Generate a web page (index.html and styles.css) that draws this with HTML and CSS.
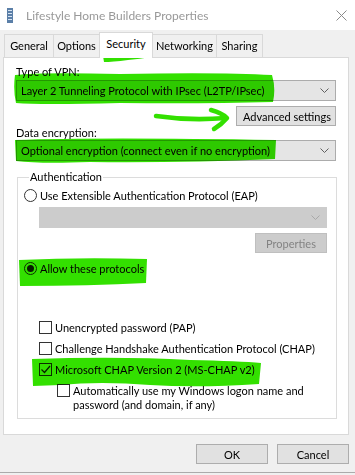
FILE: index.html
```html
<!DOCTYPE html>
<html lang="en">
<head>
    <meta charset="UTF-8">
    <meta name="viewport" content="width=device-width, initial-scale=1.0">
    <title>Lifestyle Home Builders Properties</title>
    <link rel="stylesheet" href="styles.css">
</head>
<body>
    <div class="window">
        <div class="titlebar">
            <svg class="app-icon" width="6" height="15" viewBox="0 0 6 15">
                <rect x="0" y="0" width="6" height="15" fill="#5b7fa8"/>
                <rect x="1" y="2" width="4" height="1" fill="#d6e3f2"/>
                <rect x="1" y="5" width="4" height="1" fill="#d6e3f2"/>
                <rect x="1" y="8" width="4" height="1" fill="#d6e3f2"/>
                <rect x="1" y="11" width="4" height="1" fill="#d6e3f2"/>
            </svg>
            <span class="title">Lifestyle Home Builders Properties</span>
            <svg class="close" width="11" height="11" viewBox="0 0 11 11">
                <path d="M0.5 0.5 L10.5 10.5 M10.5 0.5 L0.5 10.5" stroke="#8a8a8a" stroke-width="1"/>
            </svg>
        </div>

        <div class="tabs">
            <div class="tab tab-general">General</div>
            <div class="tab tab-options">Options</div>
            <div class="tab tab-security active">Security</div>
            <div class="tab tab-networking">Networking</div>
            <div class="tab tab-sharing">Sharing</div>
        </div>

        <div class="panel">
            <div class="label">Type of VPN:</div>
            <div class="combo">
                <span>Layer 2 Tunneling Protocol with IPsec (L2TP/IPsec)</span>
                <svg class="chevron" width="9" height="5" viewBox="0 0 9 5"><path d="M0.5 0.5 L4.5 4.5 L8.5 0.5" fill="none" stroke="#606060"/></svg>
            </div>
            <div class="button-row">
                <button class="btn btn-wide">Advanced settings</button>
            </div>
            <div class="label label-tight">Data encryption:</div>
            <div class="combo">
                <span>Optional encryption (connect even if no encryption)</span>
                <svg class="chevron" width="9" height="5" viewBox="0 0 9 5"><path d="M0.5 0.5 L4.5 4.5 L8.5 0.5" fill="none" stroke="#606060"/></svg>
            </div>

            <fieldset class="group">
                <legend>Authentication</legend>

                <div class="option">
                    <span class="radio"></span>
                    <span>Use Extensible Authentication Protocol (EAP)</span>
                </div>
                <div class="combo combo-disabled">
                    <span></span>
                    <svg class="chevron" width="9" height="5" viewBox="0 0 9 5"><path d="M0.5 0.5 L4.5 4.5 L8.5 0.5" fill="none" stroke="#a8a8a8"/></svg>
                </div>
                <div class="button-row">
                    <button class="btn btn-disabled">Properties</button>
                </div>

                <div class="option option-allow">
                    <span class="radio checked"></span>
                    <span>Allow these protocols</span>
                </div>

                <div class="option option-first">
                    <span class="check"></span>
                    <span>Unencrypted password (PAP)</span>
                </div>
                <div class="option">
                    <span class="check"></span>
                    <span>Challenge Handshake Authentication Protocol (CHAP)</span>
                </div>
                <div class="option">
                    <span class="check checked">
                        <svg width="11" height="11" viewBox="0 0 11 11"><path d="M1.5 5.5 L4.5 8.5 L10 2" fill="none" stroke="#222" stroke-width="1.2"/></svg>
                    </span>
                    <span>Microsoft CHAP Version 2 (MS-CHAP v2)</span>
                </div>
                <div class="option option-sub">
                    <span class="check"></span>
                    <span class="wrap">Automatically use my Windows logon name and password (and domain, if any)</span>
                </div>
            </fieldset>
        </div>

        <div class="footer">
            <button class="btn">OK</button>
            <button class="btn">Cancel</button>
        </div>

        <!-- marker scribbles drawn over the screenshot -->
        <svg class="marks" width="355" height="475" viewBox="0 0 355 475">
            <g fill="#33e000">
                <path d="M102 36 Q125 34 147 34 Q150 35 150 39 L151 57 Q140 59 128 60 Q112 62 104 62 L102 50 Z"/>
                <path d="M15 75 Q40 72 120 74 Q220 72 272 75 Q276 88 273 102 Q200 104 120 103 Q40 105 16 103 Q13 90 15 75 Z"/>
                <path d="M15 140 Q100 137 276 140 L275 159 Q180 163 90 162 Q40 164 16 161 Z"/>
                <path d="M19 260 Q80 257 147 259 L146 283 Q90 286 20 286 Z"/>
                <path d="M32 359 Q120 356 190 360 Q240 361 261 363 L259 384 Q200 388 150 385 Q100 381 60 385 L33 386 Z"/>
            </g>
            <g fill="none" stroke="#33e000" stroke-width="4.5" stroke-linecap="round" stroke-linejoin="round">
                <path d="M156 116 Q190 121 226 118"/>
                <path d="M211 110 Q222 113 227 118 Q222 124 214 129"/>
            </g>
        </svg>
    </div>
</body>
</html>
```

FILE: styles.css
```css
* {
    box-sizing: border-box;
}
body {
    margin: 0;
    font-family: Lato, "Liberation Sans", sans-serif;
    font-size: 11px;
    color: #000;
    background: #f0f0f0;
}
.window {
    position: relative;
    width: 355px;
    height: 473px;
    background: #f0f0f0;
    border-bottom: 1px solid #ababab;
    white-space: nowrap;
}
.titlebar {
    height: 30px;
    background: #fff;
    display: flex;
    align-items: center;
    padding-left: 7px;
}
.app-icon {
    margin-right: 13px;
}
.title {
    color: #999;
    font-size: 12px;
    flex: 1;
}
.close {
    margin-right: 8px;
}
.tabs {
    display: flex;
    align-items: flex-end;
    height: 27px;
    padding-left: 4px;
}
.tab {
    height: 23px;
    line-height: 21px;
    text-align: center;
    border: 1px solid #d9d9d9;
    border-bottom: none;
    border-right: none;
    background: #f0f0f0;
}
.tab-general { width: 49px; }
.tab-options { width: 46px; }
.tab-security { width: 54px; }
.tab-networking { width: 63px; }
.tab-sharing { width: 47px; }
.tab:last-child {
    border-right: 1px solid #d9d9d9;
}
.tab.active {
    height: 26px;
    background: #fff;
    border-right: 1px solid #d9d9d9;
    margin-bottom: -1px;
    position: relative;
    z-index: 1;
}
.tab.active + .tab {
    border-left: none;
}
.panel {
    margin-left: 3px;
    width: 346px;
    height: 378px;
    background: #fff;
    border: 1px solid #d9d9d9;
    padding: 6px 12px 0 12px;
}
.label {
    line-height: 16px;
}
.label-tight {
    line-height: 14px;
}
.combo {
    height: 21px;
    display: flex;
    align-items: center;
    justify-content: space-between;
    padding: 0 6px 0 4px;
    background: #e5e5e5;
    border: 1px solid #acacac;
}
.combo-disabled {
    margin: 4px 0 0 15px;
    background: #cccccc;
    border-color: #cccccc;
}
.button-row {
    display: flex;
    justify-content: flex-end;
    margin-top: 5px;
}
.btn {
    height: 20px;
    min-width: 72px;
    padding: 0 6px;
    font: inherit;
    color: #000;
    background: #e1e1e1;
    border: 1px solid #adadad;
}
.btn-wide {
    width: 100px;
}
.btn-disabled {
    color: #838383;
    background: #cccccc;
    border-color: #bfbfbf;
}
.group {
    margin: 9px 0 0 1px;
    width: 320px;
    height: 249px;
    padding: 0 9px 0 6px;
    border: 1px solid #dcdcdc;
}
.group legend {
    padding: 0 1px;
    margin-left: 5px;
    line-height: 14px;
}
.option {
    display: flex;
    align-items: flex-start;
    gap: 3px;
    line-height: 14px;
    margin-top: 7px;
}
.option:first-of-type {
    margin-top: 5px;
}
.option-allow {
    margin-top: 9px;
}
.option-first {
    margin: 45px 0 0 15px;
}
.option-first ~ .option {
    margin-left: 15px;
}
.option-first ~ .option-sub {
    margin-left: 33px;
}
.wrap {
    white-space: normal;
    width: 232px;
}
.radio {
    flex: none;
    width: 13px;
    height: 13px;
    border: 1px solid #333;
    border-radius: 50%;
    background: #fff;
    display: flex;
    align-items: center;
    justify-content: center;
}
.radio.checked::after {
    content: "";
    width: 7px;
    height: 7px;
    border-radius: 50%;
    background: #222;
}
.check {
    flex: none;
    width: 13px;
    height: 13px;
    border: 1px solid #333;
    background: #fff;
    display: flex;
    align-items: center;
    justify-content: center;
}
.footer {
    display: flex;
    justify-content: flex-end;
    gap: 9px;
    padding: 9px 6px 0 0;
}
.marks {
    position: absolute;
    top: 0;
    left: 0;
    pointer-events: none;
    mix-blend-mode: multiply;
}
```
